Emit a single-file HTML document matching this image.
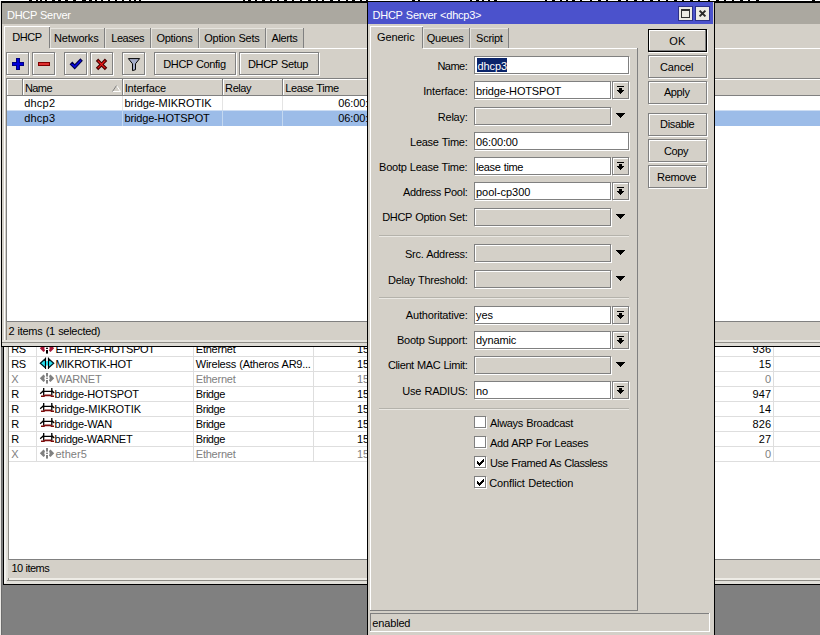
<!DOCTYPE html>
<html><head><meta charset="utf-8"><title>DHCP Server</title>
<style>
html,body{margin:0;padding:0;}
body{width:820px;height:635px;overflow:hidden;background:#808080;position:relative;font-family:"Liberation Sans", sans-serif;font-size:11px;}
div,span.t,svg.a{position:absolute;box-sizing:content-box;}
span.t{white-space:pre;line-height:13px;height:13px;}
</style></head><body>
<div style="left:0px;top:0px;width:820px;height:1px;background:#FFFFFF"></div>
<div style="left:1px;top:1px;width:819px;height:1px;background:#000"></div>
<div style="left:1px;top:2px;width:819px;height:1px;background:#3A3936"></div>
<div style="left:29px;top:0px;width:3px;height:1px;background:#000"></div>
<div style="left:36px;top:0px;width:2px;height:1px;background:#000"></div>
<div style="left:40px;top:0px;width:2px;height:1px;background:#000"></div>
<div style="left:45px;top:0px;width:2px;height:1px;background:#000"></div>
<div style="left:52px;top:0px;width:3px;height:1px;background:#000"></div>
<div style="left:58px;top:0px;width:3px;height:1px;background:#000"></div>
<div style="left:65px;top:0px;width:3px;height:1px;background:#000"></div>
<div style="left:73px;top:0px;width:3px;height:1px;background:#000"></div>
<div style="left:82px;top:0px;width:4px;height:1px;background:#000"></div>
<div style="left:89px;top:0px;width:3px;height:1px;background:#000"></div>
<div style="left:95px;top:0px;width:2px;height:1px;background:#000"></div>
<div style="left:101px;top:0px;width:2px;height:1px;background:#000"></div>
<div style="left:108px;top:0px;width:2px;height:1px;background:#000"></div>
<div style="left:115px;top:0px;width:2px;height:1px;background:#000"></div>
<div style="left:122px;top:0px;width:2px;height:1px;background:#000"></div>
<div style="left:129px;top:0px;width:2px;height:1px;background:#000"></div>
<div style="left:134px;top:0px;width:2px;height:1px;background:#000"></div>
<div style="left:139px;top:0px;width:2px;height:1px;background:#000"></div>
<div style="left:243px;top:0px;width:2px;height:1px;background:#000"></div>
<div style="left:248px;top:0px;width:3px;height:1px;background:#000"></div>
<div style="left:255px;top:0px;width:2px;height:1px;background:#000"></div>
<div style="left:262px;top:0px;width:3px;height:1px;background:#000"></div>
<div style="left:270px;top:0px;width:2px;height:1px;background:#000"></div>
<div style="left:277px;top:0px;width:2px;height:1px;background:#000"></div>
<div style="left:284px;top:0px;width:3px;height:1px;background:#000"></div>
<div style="left:292px;top:0px;width:2px;height:1px;background:#000"></div>
<div style="left:300px;top:0px;width:2px;height:1px;background:#000"></div>
<div style="left:308px;top:0px;width:3px;height:1px;background:#000"></div>
<div style="left:316px;top:0px;width:2px;height:1px;background:#000"></div>
<div style="left:322px;top:0px;width:2px;height:1px;background:#000"></div>
<div style="left:330px;top:0px;width:3px;height:1px;background:#000"></div>
<div style="left:338px;top:0px;width:2px;height:1px;background:#000"></div>
<div style="left:346px;top:0px;width:2px;height:1px;background:#000"></div>
<div style="left:352px;top:0px;width:3px;height:1px;background:#000"></div>
<div style="left:360px;top:0px;width:2px;height:1px;background:#000"></div>
<div style="left:366px;top:0px;width:2px;height:1px;background:#000"></div>
<div style="left:412px;top:0px;width:3px;height:1px;background:#000"></div>
<div style="left:418px;top:0px;width:2px;height:1px;background:#000"></div>
<div style="left:470px;top:0px;width:2px;height:1px;background:#000"></div>
<div style="left:476px;top:0px;width:3px;height:1px;background:#000"></div>
<div style="left:482px;top:0px;width:2px;height:1px;background:#000"></div>
<div style="left:488px;top:0px;width:2px;height:1px;background:#000"></div>
<div style="left:494px;top:0px;width:3px;height:1px;background:#000"></div>
<div style="left:545px;top:0px;width:2px;height:1px;background:#000"></div>
<div style="left:552px;top:0px;width:3px;height:1px;background:#000"></div>
<div style="left:560px;top:0px;width:2px;height:1px;background:#000"></div>
<div style="left:566px;top:0px;width:2px;height:1px;background:#000"></div>
<div style="left:572px;top:0px;width:3px;height:1px;background:#000"></div>
<div style="left:580px;top:0px;width:2px;height:1px;background:#000"></div>
<div style="left:590px;top:0px;width:2px;height:1px;background:#000"></div>
<div style="left:598px;top:0px;width:3px;height:1px;background:#000"></div>
<div style="left:606px;top:0px;width:2px;height:1px;background:#000"></div>
<div style="left:618px;top:0px;width:3px;height:1px;background:#000"></div>
<div style="left:626px;top:0px;width:2px;height:1px;background:#000"></div>
<div style="left:634px;top:0px;width:3px;height:1px;background:#000"></div>
<div style="left:642px;top:0px;width:2px;height:1px;background:#000"></div>
<div style="left:650px;top:0px;width:3px;height:1px;background:#000"></div>
<div style="left:658px;top:0px;width:2px;height:1px;background:#000"></div>
<div style="left:666px;top:0px;width:2px;height:1px;background:#000"></div>
<div style="left:674px;top:0px;width:3px;height:1px;background:#000"></div>
<div style="left:682px;top:0px;width:2px;height:1px;background:#000"></div>
<div style="left:690px;top:0px;width:3px;height:1px;background:#000"></div>
<div style="left:698px;top:0px;width:2px;height:1px;background:#000"></div>
<div style="left:708px;top:0px;width:2px;height:1px;background:#000"></div>
<div style="left:716px;top:0px;width:3px;height:1px;background:#000"></div>
<div style="left:724px;top:0px;width:2px;height:1px;background:#000"></div>
<div style="left:732px;top:0px;width:2px;height:1px;background:#000"></div>
<div style="left:740px;top:0px;width:3px;height:1px;background:#000"></div>
<div style="left:748px;top:0px;width:2px;height:1px;background:#000"></div>
<div style="left:756px;top:0px;width:3px;height:1px;background:#000"></div>
<div style="left:812px;top:0px;width:3px;height:1px;background:#000"></div>
<div style="left:0px;top:1px;width:1px;height:634px;background:#ECEAE6"></div>
<div style="left:1px;top:347px;width:1px;height:288px;background:#6C6C6C"></div>
<div style="left:3px;top:340px;width:817px;height:245px;background:#000"></div>
<div style="left:4px;top:340px;width:816px;height:244px;background:#E2E0DA"></div>
<div style="left:4px;top:340px;width:2px;height:243px;background:#F2F1EE"></div>
<div style="left:8px;top:340px;width:1px;height:240px;background:#8E8C86"></div>
<div style="left:9px;top:340px;width:811px;height:219px;background:#FFFFFF"></div>
<div style="left:9px;top:356px;width:811px;height:1px;background:#DEDEDE"></div>
<div style="left:9px;top:371px;width:811px;height:1px;background:#DEDEDE"></div>
<div style="left:9px;top:386px;width:811px;height:1px;background:#DEDEDE"></div>
<div style="left:9px;top:401px;width:811px;height:1px;background:#DEDEDE"></div>
<div style="left:9px;top:416px;width:811px;height:1px;background:#DEDEDE"></div>
<div style="left:9px;top:431px;width:811px;height:1px;background:#DEDEDE"></div>
<div style="left:9px;top:446px;width:811px;height:1px;background:#DEDEDE"></div>
<div style="left:9px;top:461px;width:811px;height:1px;background:#DEDEDE"></div>
<div style="left:36px;top:340px;width:1px;height:122px;background:#DEDEDE"></div>
<div style="left:193px;top:340px;width:1px;height:122px;background:#DEDEDE"></div>
<div style="left:313px;top:340px;width:1px;height:122px;background:#DEDEDE"></div>
<div style="left:773px;top:340px;width:1px;height:122px;background:#DEDEDE"></div>
<span class="t" style="left:11.3px;top:343px;letter-spacing:-0.58px;">RS</span>
<span class="t" style="left:55.4px;top:343px;letter-spacing:-0.31px;">ETHER-3-HOTSPOT</span>
<span class="t" style="left:195.8px;top:343px;letter-spacing:-0.23px;">Ethernet</span>
<span class="t" style="left:357.1px;top:343px;letter-spacing:-0.25px;">15</span>
<span class="t" style="left:752.6px;top:343px;letter-spacing:0.06px;">936</span>
<svg class="a" style="left:39px;top:342.0px" width="16" height="13" viewBox="39 342.0 16 13"><path d="M39.8 348.3 L43.5 344.5 L45 345.90000000000003 L44.3 348.3 L45 350.7 L43.5 352.1 Z M54.2 348.3 L50.5 344.5 L49 345.90000000000003 L49.7 348.3 L49 350.7 L50.5 352.1 Z" fill="#A81838"/><rect x="46" y="343.0" width="2" height="3.6" fill="#000"/><rect x="46" y="347.7" width="2" height="1.2" fill="#000"/><rect x="46" y="350.0" width="2" height="3.6" fill="#000"/></svg>
<span class="t" style="left:11.3px;top:358px;letter-spacing:-0.58px;">RS</span>
<span class="t" style="left:55.4px;top:358px;letter-spacing:-0.27px;">MIKROTIK-HOT</span>
<span class="t" style="left:195.8px;top:358px;letter-spacing:-0.25px;word-spacing:0.5px;">Wireless (Atheros AR9...</span>
<span class="t" style="left:357.1px;top:358px;letter-spacing:-0.25px;">15</span>
<span class="t" style="left:758.8px;top:358px;letter-spacing:0.05px;">15</span>
<svg class="a" style="left:39px;top:357.0px" width="16" height="13" viewBox="39 357.0 16 13"><path d="M40.3 363.3 L45.5 358.7 V367.90000000000003 Z M53.7 363.3 L48.5 358.7 V367.90000000000003 Z" fill="#28E0F0" stroke="#001820" stroke-width="1.2"/><rect x="46" y="361.1" width="2" height="4.4" fill="#28E0F0"/><path d="M45.5 357.7 V368.90000000000003 M48.5 357.7 V368.90000000000003" stroke="#000" stroke-width="1"/></svg>
<span class="t" style="left:11.3px;top:373px;color:#808080;letter-spacing:-0.2px;">X</span>
<span class="t" style="left:55.4px;top:373px;color:#808080;letter-spacing:-0.19px;">WARNET</span>
<span class="t" style="left:195.8px;top:373px;color:#808080;letter-spacing:-0.23px;">Ethernet</span>
<span class="t" style="left:357.1px;top:373px;color:#808080;letter-spacing:-0.25px;">15</span>
<span class="t" style="left:764.9px;top:373px;color:#808080;letter-spacing:-0.2px;">0</span>
<svg class="a" style="left:39px;top:372.0px" width="16" height="13" viewBox="39 372.0 16 13"><path d="M39.8 378.3 L43.5 374.5 L45 375.90000000000003 L44.3 378.3 L45 380.7 L43.5 382.1 Z M54.2 378.3 L50.5 374.5 L49 375.90000000000003 L49.7 378.3 L49 380.7 L50.5 382.1 Z" fill="#808080"/><rect x="46" y="373.0" width="2" height="3.6" fill="#808080"/><rect x="46" y="377.7" width="2" height="1.2" fill="#808080"/><rect x="46" y="380.0" width="2" height="3.6" fill="#808080"/></svg>
<span class="t" style="left:11.3px;top:388px;letter-spacing:-0.2px;">R</span>
<span class="t" style="left:54.6px;top:388px;letter-spacing:-0.23px;">bridge-HOTSPOT</span>
<span class="t" style="left:195.8px;top:388px;letter-spacing:-0.46px;">Bridge</span>
<span class="t" style="left:357.1px;top:388px;letter-spacing:-0.25px;">15</span>
<span class="t" style="left:752.6px;top:388px;letter-spacing:0.06px;">947</span>
<svg class="a" style="left:39px;top:387.0px" width="16" height="13" viewBox="39 387.0 16 13"><path d="M43.7 388.0 V395.8 M51.8 388.0 V395.8 M43.7 391.3 H51.8 M43.7 390.5 L40.2 393.8 M51.8 390.5 L54.2 393.0" stroke="#000" stroke-width="1.3" fill="none"/><path d="M41 396.3 H44 L45 395.40000000000003 H50.5 L51.5 396.3 H54" stroke="#7C0C0C" stroke-width="1.6" fill="none"/></svg>
<span class="t" style="left:11.3px;top:403px;letter-spacing:-0.2px;">R</span>
<span class="t" style="left:54.6px;top:403px;letter-spacing:-0.07px;">bridge-MIKROTIK</span>
<span class="t" style="left:195.8px;top:403px;letter-spacing:-0.46px;">Bridge</span>
<span class="t" style="left:357.1px;top:403px;letter-spacing:-0.25px;">15</span>
<span class="t" style="left:758.8px;top:403px;letter-spacing:0.05px;">14</span>
<svg class="a" style="left:39px;top:402.0px" width="16" height="13" viewBox="39 402.0 16 13"><path d="M43.7 403.0 V410.8 M51.8 403.0 V410.8 M43.7 406.3 H51.8 M43.7 405.5 L40.2 408.8 M51.8 405.5 L54.2 408.0" stroke="#000" stroke-width="1.3" fill="none"/><path d="M41 411.3 H44 L45 410.40000000000003 H50.5 L51.5 411.3 H54" stroke="#7C0C0C" stroke-width="1.6" fill="none"/></svg>
<span class="t" style="left:11.3px;top:418px;letter-spacing:-0.2px;">R</span>
<span class="t" style="left:54.6px;top:418px;letter-spacing:-0.22px;">bridge-WAN</span>
<span class="t" style="left:195.8px;top:418px;letter-spacing:-0.46px;">Bridge</span>
<span class="t" style="left:357.1px;top:418px;letter-spacing:-0.25px;">15</span>
<span class="t" style="left:752.6px;top:418px;letter-spacing:0.06px;">826</span>
<svg class="a" style="left:39px;top:417.0px" width="16" height="13" viewBox="39 417.0 16 13"><path d="M43.7 418.0 V425.8 M51.8 418.0 V425.8 M43.7 421.3 H51.8 M43.7 420.5 L40.2 423.8 M51.8 420.5 L54.2 423.0" stroke="#000" stroke-width="1.3" fill="none"/><path d="M41 426.3 H44 L45 425.40000000000003 H50.5 L51.5 426.3 H54" stroke="#7C0C0C" stroke-width="1.6" fill="none"/></svg>
<span class="t" style="left:11.3px;top:433px;letter-spacing:-0.2px;">R</span>
<span class="t" style="left:54.6px;top:433px;letter-spacing:-0.29px;">bridge-WARNET</span>
<span class="t" style="left:195.8px;top:433px;letter-spacing:-0.46px;">Bridge</span>
<span class="t" style="left:357.1px;top:433px;letter-spacing:-0.25px;">15</span>
<span class="t" style="left:758.8px;top:433px;letter-spacing:0.05px;">27</span>
<svg class="a" style="left:39px;top:432.0px" width="16" height="13" viewBox="39 432.0 16 13"><path d="M43.7 433.0 V440.8 M51.8 433.0 V440.8 M43.7 436.3 H51.8 M43.7 435.5 L40.2 438.8 M51.8 435.5 L54.2 438.0" stroke="#000" stroke-width="1.3" fill="none"/><path d="M41 441.3 H44 L45 440.40000000000003 H50.5 L51.5 441.3 H54" stroke="#7C0C0C" stroke-width="1.6" fill="none"/></svg>
<span class="t" style="left:11.3px;top:448px;color:#808080;letter-spacing:-0.2px;">X</span>
<span class="t" style="left:55.4px;top:448px;color:#808080;letter-spacing:0.06px;">ether5</span>
<span class="t" style="left:195.8px;top:448px;color:#808080;letter-spacing:-0.23px;">Ethernet</span>
<span class="t" style="left:357.1px;top:448px;color:#808080;letter-spacing:-0.25px;">15</span>
<span class="t" style="left:764.9px;top:448px;color:#808080;letter-spacing:-0.2px;">0</span>
<svg class="a" style="left:39px;top:447.0px" width="16" height="13" viewBox="39 447.0 16 13"><path d="M39.8 453.3 L43.5 449.5 L45 450.90000000000003 L44.3 453.3 L45 455.7 L43.5 457.1 Z M54.2 453.3 L50.5 449.5 L49 450.90000000000003 L49.7 453.3 L49 455.7 L50.5 457.1 Z" fill="#808080"/><rect x="46" y="448.0" width="2" height="3.6" fill="#808080"/><rect x="46" y="452.7" width="2" height="1.2" fill="#808080"/><rect x="46" y="455.0" width="2" height="3.6" fill="#808080"/></svg>
<div style="left:9px;top:559px;width:811px;height:1px;background:#808080"></div>
<div style="left:8px;top:560px;width:812px;height:18px;background:#D4D0C8"></div>
<div style="left:9px;top:578px;width:811px;height:2px;background:#EEECE6"></div>
<div style="left:7px;top:580px;width:813px;height:1px;background:#8E8C86"></div>
<div style="left:6px;top:581px;width:814px;height:3px;background:#E2E0DA"></div>
<span class="t" style="left:11.4px;top:562px;letter-spacing:-0.54px;word-spacing:0.5px;">10 items</span>
<div style="left:2px;top:585px;width:818px;height:50px;background:#808080"></div>
<div style="left:1px;top:2px;width:819px;height:345px;background:#000"></div>
<div style="left:2px;top:3px;width:818px;height:343px;background:#D4D0C8"></div>
<div style="left:2px;top:3px;width:818px;height:21px;background:#ABA8A0"></div>
<span class="t" style="left:7.1px;top:9px;color:#FFFFFF;letter-spacing:-0.31px;word-spacing:0.5px;">DHCP Server</span>
<div style="left:4px;top:48px;width:816px;height:1px;background:#FFFFFF"></div>
<div style="left:4px;top:48px;width:1px;height:292px;background:#FFFFFF"></div>
<div style="left:50px;top:28px;width:55px;height:20px;background:#C9C6BE"></div>
<div style="left:50px;top:28px;width:55px;height:1px;background:#E6E4DE"></div>
<div style="left:50px;top:28px;width:1px;height:20px;background:#E6E4DE"></div>
<div style="left:104px;top:28px;width:1px;height:20px;background:#808080"></div>
<span class="t" style="left:54.1px;top:32px;letter-spacing:-0.18px;">Networks</span>
<div style="left:105px;top:28px;width:46px;height:20px;background:#C9C6BE"></div>
<div style="left:105px;top:28px;width:46px;height:1px;background:#E6E4DE"></div>
<div style="left:105px;top:28px;width:1px;height:20px;background:#E6E4DE"></div>
<div style="left:150px;top:28px;width:1px;height:20px;background:#808080"></div>
<span class="t" style="left:111.2px;top:32px;letter-spacing:-0.42px;">Leases</span>
<div style="left:151px;top:28px;width:48px;height:20px;background:#C9C6BE"></div>
<div style="left:151px;top:28px;width:48px;height:1px;background:#E6E4DE"></div>
<div style="left:151px;top:28px;width:1px;height:20px;background:#E6E4DE"></div>
<div style="left:198px;top:28px;width:1px;height:20px;background:#808080"></div>
<span class="t" style="left:156.4px;top:32px;letter-spacing:-0.27px;">Options</span>
<div style="left:199px;top:28px;width:67px;height:20px;background:#C9C6BE"></div>
<div style="left:199px;top:28px;width:67px;height:1px;background:#E6E4DE"></div>
<div style="left:199px;top:28px;width:1px;height:20px;background:#E6E4DE"></div>
<div style="left:265px;top:28px;width:1px;height:20px;background:#808080"></div>
<span class="t" style="left:204.3px;top:32px;letter-spacing:-0.26px;word-spacing:0.5px;">Option Sets</span>
<div style="left:266px;top:28px;width:38px;height:20px;background:#C9C6BE"></div>
<div style="left:266px;top:28px;width:38px;height:1px;background:#E6E4DE"></div>
<div style="left:266px;top:28px;width:1px;height:20px;background:#E6E4DE"></div>
<div style="left:303px;top:28px;width:1px;height:20px;background:#808080"></div>
<span class="t" style="left:271.6px;top:32px;letter-spacing:-0.39px;">Alerts</span>
<div style="left:4px;top:26px;width:46px;height:23px;background:#D4D0C8"></div>
<div style="left:4px;top:26px;width:46px;height:1px;background:#FFFFFF"></div>
<div style="left:4px;top:26px;width:1px;height:23px;background:#FFFFFF"></div>
<div style="left:49px;top:27px;width:1px;height:21px;background:#808080"></div>
<span class="t" style="left:12.2px;top:31px;letter-spacing:-0.42px;">DHCP</span>
<div style="left:7px;top:53px;width:21px;height:21px;border:1px solid #FFFFFF;"></div>
<div style="left:6px;top:52px;width:21px;height:21px;border:1px solid #808080;"></div>
<div style="left:33px;top:53px;width:21px;height:21px;border:1px solid #FFFFFF;"></div>
<div style="left:32px;top:52px;width:21px;height:21px;border:1px solid #808080;"></div>
<div style="left:65px;top:53px;width:21px;height:21px;border:1px solid #FFFFFF;"></div>
<div style="left:64px;top:52px;width:21px;height:21px;border:1px solid #808080;"></div>
<div style="left:91px;top:53px;width:21px;height:21px;border:1px solid #FFFFFF;"></div>
<div style="left:90px;top:52px;width:21px;height:21px;border:1px solid #808080;"></div>
<div style="left:123px;top:53px;width:21px;height:21px;border:1px solid #FFFFFF;"></div>
<div style="left:122px;top:52px;width:21px;height:21px;border:1px solid #808080;"></div>
<div style="left:155px;top:53px;width:80px;height:21px;border:1px solid #FFFFFF;"></div>
<div style="left:154px;top:52px;width:80px;height:21px;border:1px solid #808080;"></div>
<div style="left:240px;top:53px;width:78px;height:21px;border:1px solid #FFFFFF;"></div>
<div style="left:239px;top:52px;width:78px;height:21px;border:1px solid #808080;"></div>
<span class="t" style="left:163.2px;top:58px;letter-spacing:-0.35px;word-spacing:0.5px;">DHCP Config</span>
<span class="t" style="left:248.0px;top:58px;letter-spacing:-0.33px;word-spacing:0.5px;">DHCP Setup</span>
<svg class="a" style="left:0px;top:50px" width="160" height="28" viewBox="0 50 160 28">
<g shape-rendering="crispEdges">
<path d="M16 58h4v4h4v4h-4v4h-4v-4h-4v-4h4z" fill="#000080"/>
<path d="M17 59h2v4h4v2h-4v4h-2v-4h-4v-2h4z" fill="#0000D8"/>
<rect x="38" y="62" width="12" height="4" fill="#800000"/>
<rect x="39" y="63" width="10" height="2" fill="#E03030"/>
</g>
<path d="M70.3 64.3 L72.3 62.3 L74.7 64.9 L80.4 59.1 L82.1 60.8 L74.7 68.6 Z" fill="#0808E8" stroke="#00004C" stroke-width="1.1"/>
<path d="M96.6 61 L98.2 59.4 L101.5 62.8 L104.9 59.4 L106.5 61 L103.1 64.4 L106.5 67.8 L104.9 69.4 L101.5 66 L98.2 69.4 L96.6 67.8 L100 64.4 Z" fill="#F01818" stroke="#480000" stroke-width="1.1"/>
<path d="M128.4 58.6 h11.2 l-4.1 5.2 v5.9 l-3 .9 v-6.8 z" fill="#A4ACC8" stroke="#000" stroke-width="1"/>
</svg>
<div style="left:6px;top:78px;width:814px;height:1px;background:#808080"></div>
<div style="left:6px;top:78px;width:1px;height:243px;background:#808080"></div>
<div style="left:7px;top:79px;width:813px;height:242px;background:#FFFFFF"></div>
<div style="left:7px;top:79px;width:813px;height:17px;background:#D4D0C8"></div>
<div style="left:7px;top:79px;width:813px;height:1px;background:#FFFFFF"></div>
<div style="left:7px;top:95px;width:813px;height:1px;background:#808080"></div>
<div style="left:22px;top:79px;width:1px;height:17px;background:#808080"></div>
<div style="left:23px;top:79px;width:1px;height:16px;background:#FFFFFF"></div>
<div style="left:122px;top:79px;width:1px;height:17px;background:#808080"></div>
<div style="left:123px;top:79px;width:1px;height:16px;background:#FFFFFF"></div>
<div style="left:122px;top:96px;width:1px;height:30px;background:#E4E4E4"></div>
<div style="left:222px;top:79px;width:1px;height:17px;background:#808080"></div>
<div style="left:223px;top:79px;width:1px;height:16px;background:#FFFFFF"></div>
<div style="left:222px;top:96px;width:1px;height:30px;background:#E4E4E4"></div>
<div style="left:282px;top:79px;width:1px;height:17px;background:#808080"></div>
<div style="left:283px;top:79px;width:1px;height:16px;background:#FFFFFF"></div>
<div style="left:282px;top:96px;width:1px;height:30px;background:#E4E4E4"></div>
<div style="left:7px;top:79px;width:1px;height:16px;background:#FFFFFF"></div>
<span class="t" style="left:24.9px;top:82px;letter-spacing:-0.58px;">Name</span>
<span class="t" style="left:124.7px;top:82px;letter-spacing:-0.17px;">Interface</span>
<span class="t" style="left:225.1px;top:82px;letter-spacing:-0.41px;">Relay</span>
<span class="t" style="left:285.2px;top:82px;letter-spacing:-0.38px;word-spacing:0.5px;">Lease Time</span>
<svg class="a" style="left:111px;top:84px" width="11" height="9" viewBox="111 84 11 9"><path d="M116.5 85.5 L120.5 91.5 H112.5" fill="none" stroke="#fff" stroke-width="1"/><path d="M116.5 85.5 L112.5 91.5" fill="none" stroke="#808080" stroke-width="1"/></svg>
<div style="left:7px;top:110px;width:813px;height:1px;background:#CDDDF3"></div>
<div style="left:7px;top:111px;width:813px;height:15px;background:#9CBCE8"></div>
<div style="left:122px;top:110px;width:1px;height:16px;background:#C4D8F0"></div>
<div style="left:222px;top:110px;width:1px;height:16px;background:#C4D8F0"></div>
<div style="left:282px;top:110px;width:1px;height:16px;background:#C4D8F0"></div>
<span class="t" style="left:338.3px;top:97px;letter-spacing:-0.12px;">06:00:00</span>
<span class="t" style="left:338.3px;top:112px;letter-spacing:-0.12px;">06:00:00</span>
<span class="t" style="left:24.2px;top:97px;letter-spacing:0.22px;">dhcp2</span>
<span class="t" style="left:124.5px;top:97px;letter-spacing:-0.03px;">bridge-MIKROTIK</span>
<span class="t" style="left:24.2px;top:112px;letter-spacing:0.22px;">dhcp3</span>
<span class="t" style="left:124.5px;top:112px;letter-spacing:-0.16px;">bridge-HOTSPOT</span>
<div style="left:7px;top:321px;width:813px;height:1px;background:#808080"></div>
<div style="left:6px;top:321px;width:1px;height:21px;background:#8E8C86"></div>
<div style="left:7px;top:322px;width:813px;height:18px;background:#D4D0C8"></div>
<div style="left:2px;top:340px;width:818px;height:2px;background:#E6E4DE"></div>
<div style="left:2px;top:342px;width:818px;height:1px;background:#8E8C86"></div>
<div style="left:2px;top:343px;width:818px;height:3px;background:#DEDCD6"></div>
<span class="t" style="left:8.5px;top:325px;letter-spacing:-0.29px;word-spacing:0.5px;">2 items (1 selected)</span>
<div style="left:367px;top:1px;width:348px;height:634px;background:#000"></div>
<div style="left:368px;top:2px;width:346px;height:633px;background:#D4D0C8"></div>
<div style="left:368px;top:2px;width:345px;height:22px;background:#4B52CC"></div>
<span class="t" style="left:372.5px;top:9px;color:#FFFFFF;letter-spacing:-0.24px;word-spacing:0.5px;">DHCP Server &lt;dhcp3&gt;</span>
<div style="left:678px;top:6px;width:15px;height:15px;background:#2C3088"></div>
<div style="left:679px;top:7px;width:13px;height:13px;background:#ECEAE4"></div>
<div style="left:695px;top:6px;width:15px;height:15px;background:#2C3088"></div>
<div style="left:696px;top:7px;width:13px;height:13px;background:#ECEAE4"></div>
<svg class="a" style="left:679px;top:6px" width="14" height="14" viewBox="679 6 14 14" shape-rendering="crispEdges"><rect x="681.5" y="10.5" width="8" height="7" fill="none" stroke="#303030"/><rect x="681" y="9" width="9" height="2" fill="#303030"/></svg>
<svg class="a" style="left:696px;top:6px" width="14" height="14" viewBox="696 6 14 14"><path d="M699.6 10.6 L705.4 16.4 M705.4 10.6 L699.6 16.4" stroke="#282828" stroke-width="2"/></svg>
<div style="left:370px;top:48px;width:268px;height:1px;background:#FFFFFF"></div>
<div style="left:370px;top:48px;width:1px;height:563px;background:#FFFFFF"></div>
<div style="left:637px;top:48px;width:1px;height:563px;background:#808080"></div>
<div style="left:370px;top:610px;width:268px;height:1px;background:#808080"></div>
<div style="left:423px;top:28px;width:47px;height:20px;background:#C9C6BE"></div>
<div style="left:423px;top:28px;width:47px;height:1px;background:#E6E4DE"></div>
<div style="left:423px;top:28px;width:1px;height:20px;background:#E6E4DE"></div>
<div style="left:469px;top:28px;width:1px;height:20px;background:#808080"></div>
<span class="t" style="left:426.8px;top:32px;letter-spacing:-0.29px;">Queues</span>
<div style="left:470px;top:28px;width:39px;height:20px;background:#C9C6BE"></div>
<div style="left:470px;top:28px;width:39px;height:1px;background:#E6E4DE"></div>
<div style="left:470px;top:28px;width:1px;height:20px;background:#E6E4DE"></div>
<div style="left:508px;top:28px;width:1px;height:20px;background:#808080"></div>
<span class="t" style="left:476.1px;top:32px;letter-spacing:-0.27px;">Script</span>
<div style="left:370px;top:26px;width:53px;height:23px;background:#D4D0C8"></div>
<div style="left:370px;top:26px;width:53px;height:1px;background:#FFFFFF"></div>
<div style="left:370px;top:26px;width:1px;height:23px;background:#FFFFFF"></div>
<div style="left:422px;top:27px;width:1px;height:21px;background:#808080"></div>
<span class="t" style="left:377.1px;top:31px;letter-spacing:-0.16px;">Generic</span>
<div style="left:649px;top:30px;width:59px;height:23px;background:#FFFFFF"></div>
<div style="left:648px;top:29px;width:59px;height:23px;background:#000"></div>
<div style="left:649px;top:30px;width:57px;height:21px;background:#808080"></div>
<div style="left:649px;top:30px;width:56px;height:20px;background:#FFFFFF"></div>
<div style="left:650px;top:31px;width:55px;height:19px;background:#D4D0C8"></div>
<span class="t" style="left:669.3px;top:35px;letter-spacing:0.19px;">OK</span>
<div style="left:649px;top:56px;width:57px;height:21px;border:1px solid #FFFFFF;"></div>
<div style="left:648px;top:55px;width:57px;height:21px;border:1px solid #808080;"></div>
<span class="t" style="left:660.1px;top:61px;letter-spacing:-0.17px;">Cancel</span>
<div style="left:649px;top:82px;width:57px;height:21px;border:1px solid #FFFFFF;"></div>
<div style="left:648px;top:81px;width:57px;height:21px;border:1px solid #808080;"></div>
<span class="t" style="left:663.9px;top:86px;letter-spacing:-0.38px;">Apply</span>
<div style="left:649px;top:114px;width:57px;height:21px;border:1px solid #FFFFFF;"></div>
<div style="left:648px;top:113px;width:57px;height:21px;border:1px solid #808080;"></div>
<span class="t" style="left:660.1px;top:118px;letter-spacing:-0.36px;">Disable</span>
<div style="left:649px;top:140px;width:57px;height:21px;border:1px solid #FFFFFF;"></div>
<div style="left:648px;top:139px;width:57px;height:21px;border:1px solid #808080;"></div>
<span class="t" style="left:664.1px;top:145px;letter-spacing:-0.43px;">Copy</span>
<div style="left:649px;top:166px;width:57px;height:21px;border:1px solid #FFFFFF;"></div>
<div style="left:648px;top:165px;width:57px;height:21px;border:1px solid #808080;"></div>
<span class="t" style="left:657.1px;top:171px;letter-spacing:-0.33px;">Remove</span>
<span class="t" style="left:437.4px;top:60px;letter-spacing:-0.5px;">Name:</span>
<div style="left:475px;top:57px;width:153px;height:16px;border:1px solid #FFFFFF;"></div>
<div style="left:474px;top:56px;width:153px;height:16px;border:1px solid #808080;background:#FFFFFF;"></div>
<div style="left:477px;top:58px;width:30px;height:14px;background:#0A246A"></div>
<span class="t" style="left:477.4px;top:60px;color:#FFFFFF;letter-spacing:-0.08px;">dhcp3</span>
<span class="t" style="left:423.2px;top:85px;letter-spacing:-0.15px;">Interface:</span>
<div style="left:475px;top:82px;width:135px;height:16px;border:1px solid #FFFFFF;"></div>
<div style="left:474px;top:81px;width:135px;height:16px;border:1px solid #808080;background:#FFFFFF;"></div>
<div style="left:613px;top:82px;width:15px;height:16px;border:1px solid #FFFFFF;"></div>
<div style="left:612px;top:81px;width:15px;height:16px;border:1px solid #808080;"></div>
<svg class="a" style="left:617px;top:86px" width="7" height="8" viewBox="617 86 7 8" shape-rendering="crispEdges"><rect x="617" y="86" width="7" height="1"/><rect x="619" y="88" width="3" height="2"/><rect x="617" y="90" width="7" height="1"/><rect x="618" y="91" width="5" height="1"/><rect x="619" y="92" width="3" height="1"/><rect x="620" y="93" width="1" height="1"/></svg>
<span class="t" style="left:476.0px;top:85px;letter-spacing:-0.16px;">bridge-HOTSPOT</span>
<span class="t" style="left:437.8px;top:111px;letter-spacing:-0.24px;">Relay:</span>
<div style="left:475px;top:108px;width:135px;height:16px;border:1px solid #FFFFFF;"></div>
<div style="left:474px;top:107px;width:135px;height:16px;border:1px solid #808080;"></div>
<svg class="a" style="left:616px;top:113px" width="9" height="5" viewBox="616 113 9 5" shape-rendering="crispEdges"><rect x="616" y="113" width="9" height="1"/><rect x="617" y="114" width="7" height="1"/><rect x="618" y="115" width="5" height="1"/><rect x="619" y="116" width="3" height="1"/><rect x="620" y="117" width="1" height="1"/></svg>
<span class="t" style="left:410.1px;top:136px;letter-spacing:-0.28px;word-spacing:0.5px;">Lease Time:</span>
<div style="left:475px;top:133px;width:153px;height:16px;border:1px solid #FFFFFF;"></div>
<div style="left:474px;top:132px;width:153px;height:16px;border:1px solid #808080;background:#FFFFFF;"></div>
<span class="t" style="left:476.0px;top:136px;letter-spacing:-0.12px;">06:00:00</span>
<span class="t" style="left:379.1px;top:161px;letter-spacing:-0.26px;word-spacing:0.5px;">Bootp Lease Time:</span>
<div style="left:475px;top:158px;width:135px;height:16px;border:1px solid #FFFFFF;"></div>
<div style="left:474px;top:157px;width:135px;height:16px;border:1px solid #808080;background:#FFFFFF;"></div>
<div style="left:613px;top:158px;width:15px;height:16px;border:1px solid #FFFFFF;"></div>
<div style="left:612px;top:157px;width:15px;height:16px;border:1px solid #808080;"></div>
<svg class="a" style="left:617px;top:162px" width="7" height="8" viewBox="617 162 7 8" shape-rendering="crispEdges"><rect x="617" y="162" width="7" height="1"/><rect x="619" y="164" width="3" height="2"/><rect x="617" y="166" width="7" height="1"/><rect x="618" y="167" width="5" height="1"/><rect x="619" y="168" width="3" height="1"/><rect x="620" y="169" width="1" height="1"/></svg>
<span class="t" style="left:476.0px;top:161px;letter-spacing:-0.36px;word-spacing:0.5px;">lease time</span>
<span class="t" style="left:403.0px;top:186px;letter-spacing:-0.35px;word-spacing:0.5px;">Address Pool:</span>
<div style="left:475px;top:183px;width:135px;height:16px;border:1px solid #FFFFFF;"></div>
<div style="left:474px;top:182px;width:135px;height:16px;border:1px solid #808080;background:#FFFFFF;"></div>
<div style="left:613px;top:183px;width:15px;height:16px;border:1px solid #FFFFFF;"></div>
<div style="left:612px;top:182px;width:15px;height:16px;border:1px solid #808080;"></div>
<svg class="a" style="left:617px;top:187px" width="7" height="8" viewBox="617 187 7 8" shape-rendering="crispEdges"><rect x="617" y="187" width="7" height="1"/><rect x="619" y="189" width="3" height="2"/><rect x="617" y="191" width="7" height="1"/><rect x="618" y="192" width="5" height="1"/><rect x="619" y="193" width="3" height="1"/><rect x="620" y="194" width="1" height="1"/></svg>
<span class="t" style="left:476.0px;top:186px;">pool-cp300</span>
<span class="t" style="left:382.2px;top:211px;letter-spacing:-0.3px;word-spacing:0.5px;">DHCP Option Set:</span>
<div style="left:475px;top:209px;width:135px;height:16px;border:1px solid #FFFFFF;"></div>
<div style="left:474px;top:208px;width:135px;height:16px;border:1px solid #808080;"></div>
<svg class="a" style="left:616px;top:214px" width="9" height="5" viewBox="616 214 9 5" shape-rendering="crispEdges"><rect x="616" y="214" width="9" height="1"/><rect x="617" y="215" width="7" height="1"/><rect x="618" y="216" width="5" height="1"/><rect x="619" y="217" width="3" height="1"/><rect x="620" y="218" width="1" height="1"/></svg>
<div style="left:379px;top:235px;width:250px;height:1px;background:#B4B2AB"></div>
<div style="left:379px;top:236px;width:250px;height:1px;background:#EAE8E3"></div>
<span class="t" style="left:404.9px;top:248px;letter-spacing:-0.25px;word-spacing:0.5px;">Src. Address:</span>
<div style="left:475px;top:245px;width:135px;height:16px;border:1px solid #FFFFFF;"></div>
<div style="left:474px;top:244px;width:135px;height:16px;border:1px solid #808080;"></div>
<svg class="a" style="left:616px;top:250px" width="9" height="5" viewBox="616 250 9 5" shape-rendering="crispEdges"><rect x="616" y="250" width="9" height="1"/><rect x="617" y="251" width="7" height="1"/><rect x="618" y="252" width="5" height="1"/><rect x="619" y="253" width="3" height="1"/><rect x="620" y="254" width="1" height="1"/></svg>
<span class="t" style="left:388.0px;top:274px;letter-spacing:-0.25px;word-spacing:0.5px;">Delay Threshold:</span>
<div style="left:475px;top:271px;width:135px;height:16px;border:1px solid #FFFFFF;"></div>
<div style="left:474px;top:270px;width:135px;height:16px;border:1px solid #808080;"></div>
<svg class="a" style="left:616px;top:276px" width="9" height="5" viewBox="616 276 9 5" shape-rendering="crispEdges"><rect x="616" y="276" width="9" height="1"/><rect x="617" y="277" width="7" height="1"/><rect x="618" y="278" width="5" height="1"/><rect x="619" y="279" width="3" height="1"/><rect x="620" y="280" width="1" height="1"/></svg>
<div style="left:379px;top:297px;width:250px;height:1px;background:#B4B2AB"></div>
<div style="left:379px;top:298px;width:250px;height:1px;background:#EAE8E3"></div>
<span class="t" style="left:405.8px;top:309px;letter-spacing:-0.17px;">Authoritative:</span>
<div style="left:475px;top:307px;width:135px;height:16px;border:1px solid #FFFFFF;"></div>
<div style="left:474px;top:306px;width:135px;height:16px;border:1px solid #808080;background:#FFFFFF;"></div>
<div style="left:613px;top:307px;width:15px;height:16px;border:1px solid #FFFFFF;"></div>
<div style="left:612px;top:306px;width:15px;height:16px;border:1px solid #808080;"></div>
<svg class="a" style="left:617px;top:311px" width="7" height="8" viewBox="617 311 7 8" shape-rendering="crispEdges"><rect x="617" y="311" width="7" height="1"/><rect x="619" y="313" width="3" height="2"/><rect x="617" y="315" width="7" height="1"/><rect x="618" y="316" width="5" height="1"/><rect x="619" y="317" width="3" height="1"/><rect x="620" y="318" width="1" height="1"/></svg>
<span class="t" style="left:476.0px;top:309px;letter-spacing:-0.01px;">yes</span>
<span class="t" style="left:397.0px;top:334px;letter-spacing:-0.24px;word-spacing:0.5px;">Bootp Support:</span>
<div style="left:475px;top:332px;width:135px;height:16px;border:1px solid #FFFFFF;"></div>
<div style="left:474px;top:331px;width:135px;height:16px;border:1px solid #808080;background:#FFFFFF;"></div>
<div style="left:613px;top:332px;width:15px;height:16px;border:1px solid #FFFFFF;"></div>
<div style="left:612px;top:331px;width:15px;height:16px;border:1px solid #808080;"></div>
<svg class="a" style="left:617px;top:336px" width="7" height="8" viewBox="617 336 7 8" shape-rendering="crispEdges"><rect x="617" y="336" width="7" height="1"/><rect x="619" y="338" width="3" height="2"/><rect x="617" y="340" width="7" height="1"/><rect x="618" y="341" width="5" height="1"/><rect x="619" y="342" width="3" height="1"/><rect x="620" y="343" width="1" height="1"/></svg>
<span class="t" style="left:476.0px;top:334px;letter-spacing:-0.11px;">dynamic</span>
<span class="t" style="left:388.0px;top:359px;letter-spacing:-0.39px;word-spacing:0.5px;">Client MAC Limit:</span>
<div style="left:475px;top:357px;width:135px;height:16px;border:1px solid #FFFFFF;"></div>
<div style="left:474px;top:356px;width:135px;height:16px;border:1px solid #808080;"></div>
<svg class="a" style="left:616px;top:362px" width="9" height="5" viewBox="616 362 9 5" shape-rendering="crispEdges"><rect x="616" y="362" width="9" height="1"/><rect x="617" y="363" width="7" height="1"/><rect x="618" y="364" width="5" height="1"/><rect x="619" y="365" width="3" height="1"/><rect x="620" y="366" width="1" height="1"/></svg>
<span class="t" style="left:402.2px;top:385px;letter-spacing:-0.21px;word-spacing:0.5px;">Use RADIUS:</span>
<div style="left:475px;top:382px;width:135px;height:16px;border:1px solid #FFFFFF;"></div>
<div style="left:474px;top:381px;width:135px;height:16px;border:1px solid #808080;background:#FFFFFF;"></div>
<div style="left:613px;top:382px;width:15px;height:16px;border:1px solid #FFFFFF;"></div>
<div style="left:612px;top:381px;width:15px;height:16px;border:1px solid #808080;"></div>
<svg class="a" style="left:617px;top:386px" width="7" height="8" viewBox="617 386 7 8" shape-rendering="crispEdges"><rect x="617" y="386" width="7" height="1"/><rect x="619" y="388" width="3" height="2"/><rect x="617" y="390" width="7" height="1"/><rect x="618" y="391" width="5" height="1"/><rect x="619" y="392" width="3" height="1"/><rect x="620" y="393" width="1" height="1"/></svg>
<span class="t" style="left:476.0px;top:385px;letter-spacing:-0.05px;">no</span>
<div style="left:379px;top:408px;width:250px;height:1px;background:#B4B2AB"></div>
<div style="left:379px;top:409px;width:250px;height:1px;background:#EAE8E3"></div>
<div style="left:475px;top:417px;width:10px;height:10px;border:1px solid #FFFFFF;"></div>
<div style="left:474px;top:416px;width:10px;height:10px;border:1px solid #808080;background:#FFFFFF;"></div>
<span class="t" style="left:490.0px;top:417px;letter-spacing:-0.31px;word-spacing:0.5px;">Always Broadcast</span>
<div style="left:475px;top:437px;width:10px;height:10px;border:1px solid #FFFFFF;"></div>
<div style="left:474px;top:436px;width:10px;height:10px;border:1px solid #808080;background:#FFFFFF;"></div>
<span class="t" style="left:490.0px;top:437px;letter-spacing:-0.33px;word-spacing:0.5px;">Add ARP For Leases</span>
<div style="left:475px;top:457px;width:10px;height:10px;border:1px solid #FFFFFF;"></div>
<div style="left:474px;top:456px;width:10px;height:10px;border:1px solid #808080;background:#FFFFFF;"></div>
<svg class="a" style="left:477px;top:459px" width="7" height="7" viewBox="477 459 7 7" shape-rendering="crispEdges"><rect x="483" y="459" width="1" height="1"/><rect x="482" y="460" width="1" height="1"/><rect x="483" y="460" width="1" height="1"/><rect x="477" y="461" width="1" height="1"/><rect x="481" y="461" width="1" height="1"/><rect x="482" y="461" width="1" height="1"/><rect x="483" y="461" width="1" height="1"/><rect x="477" y="462" width="1" height="1"/><rect x="478" y="462" width="1" height="1"/><rect x="480" y="462" width="1" height="1"/><rect x="481" y="462" width="1" height="1"/><rect x="482" y="462" width="1" height="1"/><rect x="477" y="463" width="1" height="1"/><rect x="478" y="463" width="1" height="1"/><rect x="479" y="463" width="1" height="1"/><rect x="480" y="463" width="1" height="1"/><rect x="481" y="463" width="1" height="1"/><rect x="478" y="464" width="1" height="1"/><rect x="479" y="464" width="1" height="1"/><rect x="480" y="464" width="1" height="1"/><rect x="479" y="465" width="1" height="1"/></svg>
<span class="t" style="left:490.0px;top:457px;letter-spacing:-0.44px;word-spacing:0.5px;">Use Framed As Classless</span>
<div style="left:475px;top:477px;width:10px;height:10px;border:1px solid #FFFFFF;"></div>
<div style="left:474px;top:476px;width:10px;height:10px;border:1px solid #808080;background:#FFFFFF;"></div>
<svg class="a" style="left:477px;top:479px" width="7" height="7" viewBox="477 479 7 7" shape-rendering="crispEdges"><rect x="483" y="479" width="1" height="1"/><rect x="482" y="480" width="1" height="1"/><rect x="483" y="480" width="1" height="1"/><rect x="477" y="481" width="1" height="1"/><rect x="481" y="481" width="1" height="1"/><rect x="482" y="481" width="1" height="1"/><rect x="483" y="481" width="1" height="1"/><rect x="477" y="482" width="1" height="1"/><rect x="478" y="482" width="1" height="1"/><rect x="480" y="482" width="1" height="1"/><rect x="481" y="482" width="1" height="1"/><rect x="482" y="482" width="1" height="1"/><rect x="477" y="483" width="1" height="1"/><rect x="478" y="483" width="1" height="1"/><rect x="479" y="483" width="1" height="1"/><rect x="480" y="483" width="1" height="1"/><rect x="481" y="483" width="1" height="1"/><rect x="478" y="484" width="1" height="1"/><rect x="479" y="484" width="1" height="1"/><rect x="480" y="484" width="1" height="1"/><rect x="479" y="485" width="1" height="1"/></svg>
<span class="t" style="left:489.3px;top:477px;letter-spacing:-0.15px;word-spacing:0.5px;">Conflict Detection</span>
<div style="left:370px;top:613px;width:340px;height:19px;background:#FFFFFF"></div>
<div style="left:370px;top:613px;width:339px;height:18px;background:#808080"></div>
<div style="left:371px;top:614px;width:338px;height:17px;background:#D4D0C8"></div>
<span class="t" style="left:372.3px;top:617px;letter-spacing:-0.16px;">enabled</span>
</body></html>
